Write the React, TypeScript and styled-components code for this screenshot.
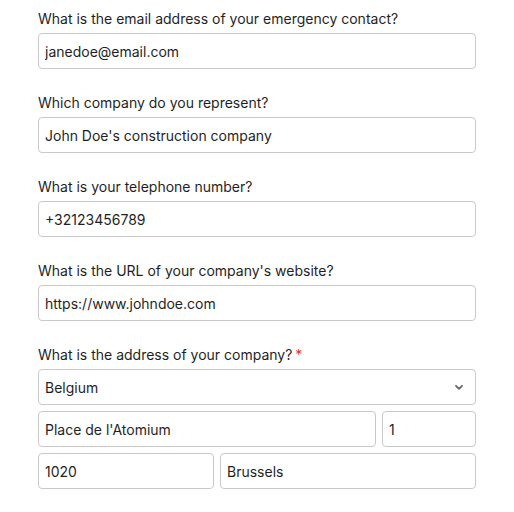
import styled, { createGlobalStyle } from "styled-components";

const GlobalStyle = createGlobalStyle`
  body {
    margin: 0;
    background: #ffffff;
    font-family: Inter, "Liberation Sans", sans-serif;
    color: #1f1f1f;
  }
`;

interface Question {
  label: string;
  value: string;
}

const questions: Question[] = [
  { label: "What is the email address of your emergency contact?", value: "janedoe@email.com" },
  { label: "Which company do you represent?", value: "John Doe's construction company" },
  { label: "What is your telephone number?", value: "+32123456789" },
  { label: "What is the URL of your company's website?", value: "https://www.johndoe.com" },
];

export default function App() {
  return (
    <>
      <GlobalStyle />
      <Form>
        {questions.map((q, index) => (
          <Field key={index}>
            <Label>{q.label}</Label>
            <Input defaultValue={q.value} />
          </Field>
        ))}
        <Field>
          <Label>
            What is the address of your company?<Required>*</Required>
          </Label>
          <AddressGroup>
            <SelectBox>
              <span>Belgium</span>
              <Chevron viewBox="0 0 10 10">
                <path d="M2.5 4 L5 6.5 L7.5 4" />
              </Chevron>
            </SelectBox>
            <Row columns="1fr 94px">
              <Input defaultValue="Place de l'Atomium" />
              <Input defaultValue="1" />
            </Row>
            <Row columns="176px 1fr">
              <Input defaultValue="1020" />
              <Input defaultValue="Brussels" />
            </Row>
          </AddressGroup>
        </Field>
      </Form>
    </>
  );
}

const Form = styled.div`
  width: 438px;
  margin: 0 auto;
  padding-top: 9px;
  display: flex;
  flex-direction: column;
  gap: 24px;
`;

const Field = styled.div`
  display: flex;
  flex-direction: column;
  gap: 4px;
`;

const Label = styled.label`
  font-size: 14px;
  line-height: 20px;
  color: #1f1f1f;
`;

const Required = styled.span`
  color: #e5332a;
  margin-left: 3px;
`;

const Input = styled.input`
  box-sizing: border-box;
  width: 100%;
  height: 36px;
  padding: 0 6px;
  border: 1px solid #c9c9c9;
  border-radius: 4px;
  font-family: Inter, "Liberation Sans", sans-serif;
  font-size: 14px;
  color: #1f1f1f;
  background: #ffffff;
  outline: none;
`;

const AddressGroup = styled.div`
  display: flex;
  flex-direction: column;
  gap: 6px;
`;

const SelectBox = styled.div`
  box-sizing: border-box;
  height: 36px;
  padding: 0 10px 0 6px;
  border: 1px solid #c9c9c9;
  border-radius: 4px;
  display: flex;
  align-items: center;
  justify-content: space-between;
  font-size: 14px;
  color: #1f1f1f;
`;

const Chevron = styled.svg`
  width: 12px;
  height: 12px;
  fill: none;
  stroke: #666;
  stroke-width: 1.5;
  stroke-linecap: round;
  stroke-linejoin: round;
`;

const Row = styled.div<{ columns: string }>`
  display: grid;
  grid-template-columns: ${(props) => props.columns};
  gap: 6px;
`;
